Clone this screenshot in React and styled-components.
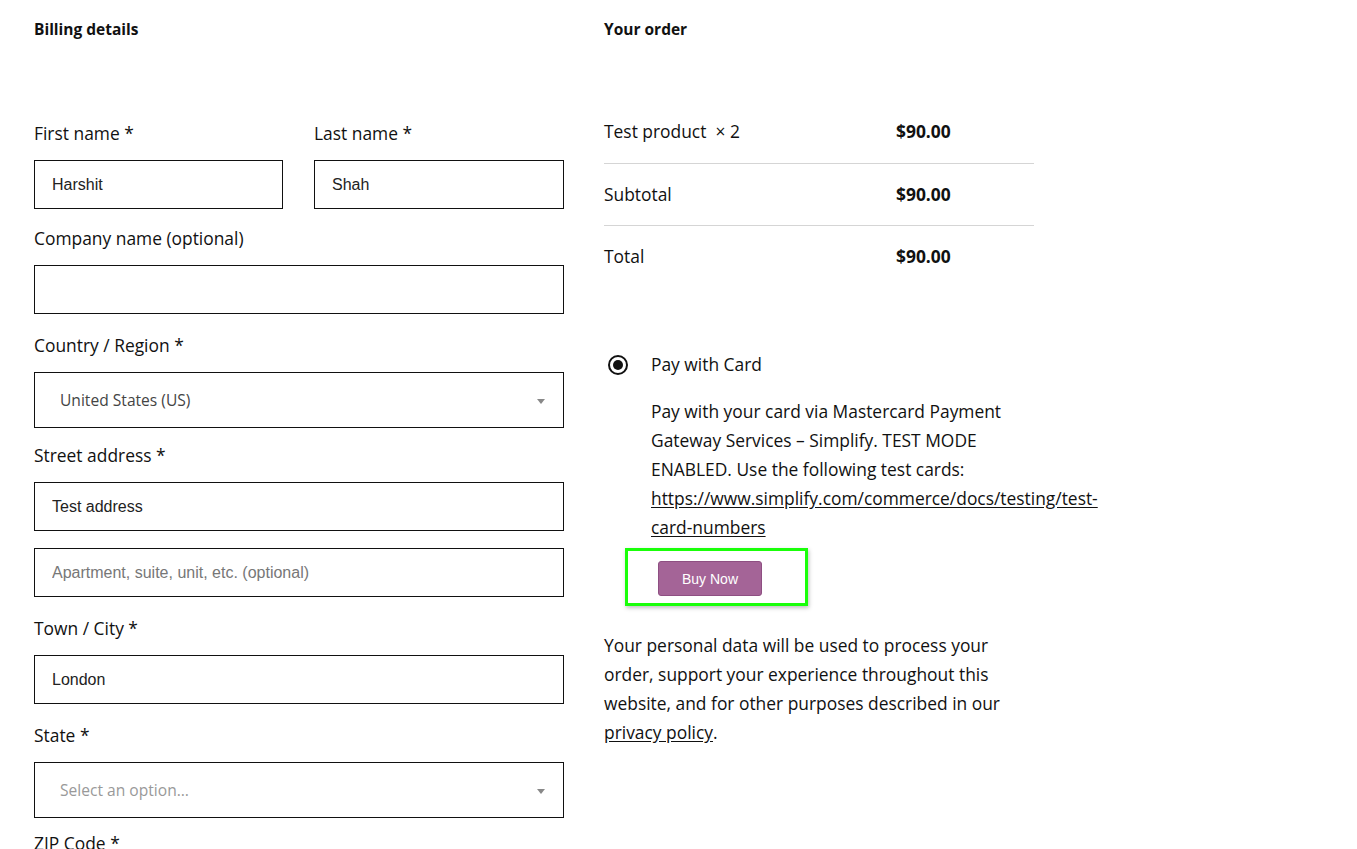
import React from 'react';
import styled, { createGlobalStyle } from 'styled-components';

const GlobalStyle = createGlobalStyle`
  body {
    margin: 0;
    background: #fff;
    color: #111;
    font-family: 'Open Sans', 'Noto Sans', sans-serif;
  }
  * {
    box-sizing: border-box;
  }
`;

const Page = styled.div`
  display: grid;
  grid-template-columns: 530px 430px;
  column-gap: 40px;
  padding: 17px 0 0 34px;
  height: 849px;
  overflow: hidden;
`;

const Column = styled.div`
  display: flex;
  flex-direction: column;
`;

const Heading = styled.h3`
  margin: 0 0 ${(p) => p.$gap}px;
  font-size: 15.5px;
  line-height: 24px;
  font-weight: 700;
`;

const Row = styled.div`
  display: grid;
  grid-template-columns: 249px 250px;
  column-gap: 31px;
`;

const Field = styled.div`
  display: flex;
  flex-direction: column;
  margin-bottom: ${(p) => p.$gap ?? 16}px;
`;

const Label = styled.label`
  font-size: 17.4px;
  line-height: 27px;
  margin-bottom: 13px;
`;

const Input = styled.input`
  height: 49px;
  width: 100%;
  border: 1px solid #111;
  border-radius: 0;
  padding: 0 17px;
  font-family: 'Liberation Sans', Arial, sans-serif;
  font-size: 16px;
  color: #222;
  background: #fff;
  outline: none;
  margin-bottom: ${(p) => p.$gap ?? 0}px;

  &::placeholder {
    color: #777;
  }
`;

const Select = styled.div`
  position: relative;
  height: 56px;
  border: 1px solid #111;
  display: flex;
  align-items: center;
  padding: 0 25px;
  font-size: 15.6px;
  color: ${(p) => (p.$placeholder ? '#999' : '#444')};

  &::after {
    content: '';
    position: absolute;
    right: 18px;
    top: 26px;
    border-top: 5px solid #888;
    border-left: 4px solid transparent;
    border-right: 4px solid transparent;
  }
`;

const OrderTable = styled.table`
  width: 430px;
  border-collapse: collapse;
  font-size: 17.4px;
`;

const Cell = styled.td`
  height: 62px;
  padding: 0 0 1px;
  vertical-align: middle;
  width: ${(p) => (p.$first ? '292px' : 'auto')};
  font-weight: ${(p) => (p.$strong ? 700 : 400)};
`;

const TableRow = styled.tr`
  border-bottom: ${(p) => (p.$last ? 'none' : '1px solid #d5d5d5')};
`;

const Payment = styled.div`
  margin-top: 63px;
  display: flex;
  flex-direction: column;
`;

const MethodRow = styled.div`
  display: flex;
  align-items: center;
  gap: 23px;
  padding-left: 4px;
  font-size: 17.4px;
  line-height: 29px;
`;

const Radio = styled.span`
  width: 20px;
  height: 20px;
  border: 2px solid #111;
  border-radius: 50%;
  display: flex;
  align-items: center;
  justify-content: center;

  &::before {
    content: '';
    width: 10px;
    height: 10px;
    border-radius: 50%;
    background: #111;
  }
`;

const Description = styled.p`
  margin: 18px 0 6px 47px;
  font-size: 17.4px;
  line-height: 29px;
  width: 383px;
`;

const Link = styled.a`
  color: #111;
  text-decoration: underline;
  text-underline-offset: 2px;
`;

const ButtonFrame = styled.div`
  margin-left: 21px;
  width: 183px;
  height: 58px;
  border: 3px solid #1aff0a;
  box-shadow: 1px 2px 4px rgba(0, 0, 0, 0.25);
  padding: 10px 0 0 30px;
`;

const BuyButton = styled.button`
  width: 104px;
  height: 35px;
  border: 1px solid #8e4f82;
  border-radius: 3px;
  background: #a46497;
  color: #fff;
  font-family: 'Liberation Sans', Arial, sans-serif;
  font-size: 14px;
  cursor: pointer;
`;

const Privacy = styled.p`
  margin: 25px 0 0;
  font-size: 17.4px;
  line-height: 29px;
`;

export default function App() {
  return (
    <>
      <GlobalStyle />
      <Page>
        <Column>
          <Heading $gap={79}>Billing details</Heading>
          <Row>
            <Field $gap={16}>
              <Label>First name *</Label>
              <Input defaultValue="Harshit" />
            </Field>
            <Field $gap={16}>
              <Label>Last name *</Label>
              <Input defaultValue="Shah" />
            </Field>
          </Row>
          <Field $gap={18}>
            <Label>Company name (optional)</Label>
            <Input />
          </Field>
          <Field $gap={14}>
            <Label>Country / Region *</Label>
            <Select>United States (US)</Select>
          </Field>
          <Field $gap={18}>
            <Label>Street address *</Label>
            <Input defaultValue="Test address" $gap={17} />
            <Input placeholder="Apartment, suite, unit, etc. (optional)" />
          </Field>
          <Field $gap={18}>
            <Label>Town / City *</Label>
            <Input defaultValue="London" />
          </Field>
          <Field $gap={12}>
            <Label>State *</Label>
            <Select $placeholder>Select an option…</Select>
          </Field>
          <Field>
            <Label>ZIP Code *</Label>
            <Input />
          </Field>
        </Column>

        <Column>
          <Heading $gap={60}>Your order</Heading>
          <OrderTable>
            <tbody>
              <TableRow>
                <Cell $first>Test product&nbsp; × 2</Cell>
                <Cell $strong>$90.00</Cell>
              </TableRow>
              <TableRow>
                <Cell $first>Subtotal</Cell>
                <Cell $strong>$90.00</Cell>
              </TableRow>
              <TableRow $last>
                <Cell $first>Total</Cell>
                <Cell $strong>$90.00</Cell>
              </TableRow>
            </tbody>
          </OrderTable>

          <Payment>
            <MethodRow>
              <Radio />
              <span>Pay with Card</span>
            </MethodRow>
            <Description>
              Pay with your card via Mastercard Payment Gateway Services – Simplify. TEST MODE
              ENABLED. Use the following test cards:{' '}
              <Link href="#">https://www.simplify.com/commerce/docs/testing/test-card-numbers</Link>
            </Description>
            <ButtonFrame>
              <BuyButton>Buy Now</BuyButton>
            </ButtonFrame>
          </Payment>

          <Privacy>
            Your personal data will be used to process your order, support your experience
            throughout this website, and for other purposes described in our{' '}
            <Link href="#">privacy policy</Link>.
          </Privacy>
        </Column>
      </Page>
    </>
  );
}
